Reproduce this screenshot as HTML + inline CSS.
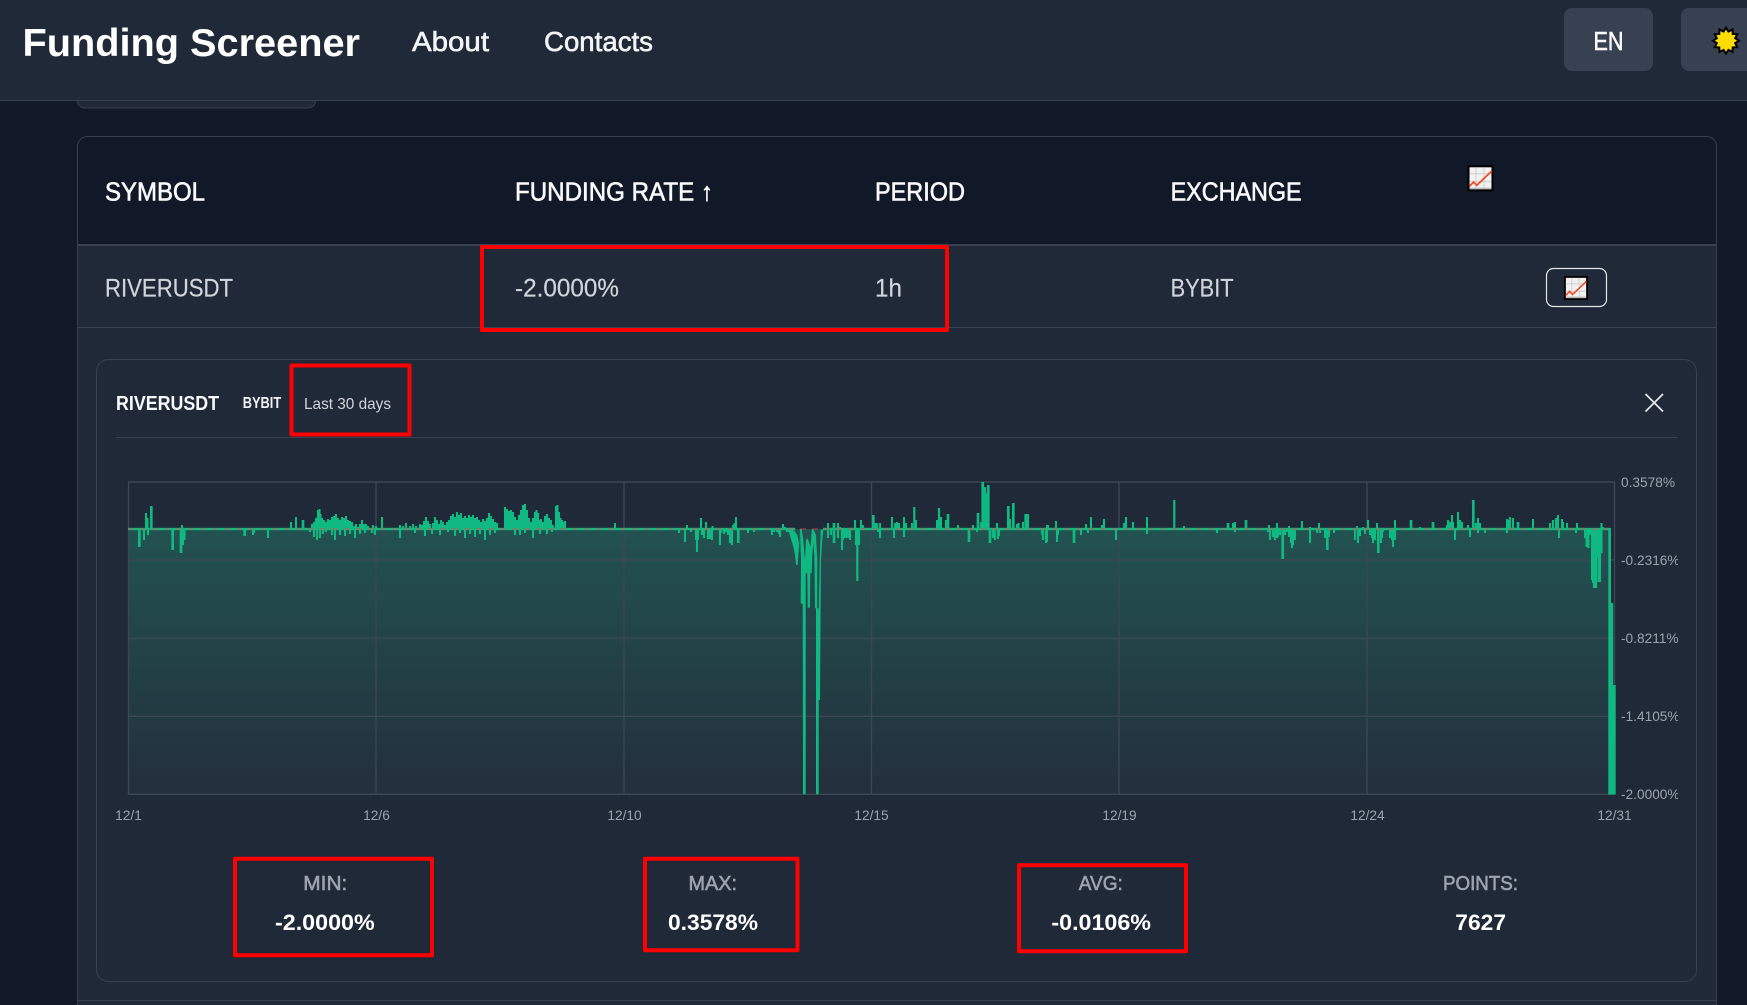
<!DOCTYPE html>
<html lang="en">
<head>
<meta charset="utf-8">
<title>Funding Screener</title>
<style>
html,body{margin:0;padding:0;background:#111827;width:1747px;height:1005px;overflow:hidden}
svg{display:block;font-family:"Liberation Sans",Arial,sans-serif}
.m{stroke:currentColor;stroke-width:.6}
.r{stroke:currentColor;stroke-width:.2}
.ax{fill:#9ca3af;font-size:13.7px}
.xl{fill:#9ca3af;font-size:13.7px;text-anchor:middle}
</style>
</head>
<body>
<svg width="1747" height="1005" viewBox="0 0 1747 1005" xmlns="http://www.w3.org/2000/svg">
<defs>
<linearGradient id="ag" gradientUnits="userSpaceOnUse" x1="0" y1="529" x2="0" y2="794">
<stop offset="0" stop-color="#225250"/><stop offset="1" stop-color="#232f3d"/>
</linearGradient>
<clipPath id="yclip"><rect x="1615" y="470" width="63" height="340"/></clipPath>
<g id="emo">
<rect x="1" y="1" width="24" height="24" fill="#f1f1f1" stroke="#000" stroke-width="2"/>
<path d="M8.5 2V24M16.5 2V24M2 8.5H24M2 16.5H24" stroke="#cfcfcf" stroke-width="1" fill="none"/>
<path d="M2 23H24" stroke="#a8a8a8" stroke-width="1"/>
<path d="M2 21L6 16.7L9.3 20L24.3 5.7" stroke="#f04a24" stroke-width="1.7" fill="none"/>
</g>
</defs>

<!-- previous card peeking under header -->
<rect x="77.5" y="80" width="238" height="28" rx="7" fill="#1f2937" stroke="#374151"/>

<!-- table wrapper -->
<rect x="77.5" y="136.5" width="1639" height="900" rx="10" fill="#111827" stroke="#374151"/>
<path d="M78 245H1716V1005H78Z" fill="#1f2937"/>
<path d="M77.5 244V1005M1716.5 244V1005" stroke="#374151" fill="none"/>
<rect x="78" y="244" width="1638" height="2" fill="#374151"/>
<rect x="78" y="327" width="1638" height="1" fill="#374151"/>
<rect x="78" y="1000" width="1638" height="1" fill="#374151"/>

<!-- header -->
<rect x="0" y="0" width="1747" height="100" fill="#1f2937"/>
<rect x="0" y="100" width="1747" height="1" fill="#374151"/>
<text x="22.500" y="56" font-size="39" font-weight="700" fill="#fff" textLength="337.500" lengthAdjust="spacingAndGlyphs">Funding Screener</text>
<text x="412" y="51" font-size="28" fill="#f3f4f6" class="m" style="color:#f3f4f6" textLength="77" lengthAdjust="spacingAndGlyphs">About</text>
<text x="544" y="51" font-size="28" fill="#f3f4f6" class="m" style="color:#f3f4f6" textLength="109" lengthAdjust="spacingAndGlyphs">Contacts</text>
<rect x="1564" y="8" width="89" height="63" rx="8" fill="#374151"/>
<text x="1593.5" y="50" font-size="26" fill="#f9fafb" class="m" style="color:#f9fafb" textLength="30" lengthAdjust="spacingAndGlyphs">EN</text>
<rect x="1681" y="8" width="90" height="63" rx="8" fill="#374151"/>
<polygon transform="translate(1726 40.7)" fill="#ffdc00" stroke="#000" stroke-width="2" stroke-linejoin="miter" points="13,0 9.18,2.46 11.26,6.5 6.72,6.72 6.5,11.26 2.46,9.18 0,13 -2.46,9.18 -6.5,11.26 -6.72,6.72 -11.26,6.5 -9.18,2.46 -13,0 -9.18,-2.46 -11.26,-6.5 -6.72,-6.72 -6.5,-11.26 -2.46,-9.18 0,-13 2.46,-9.18 6.5,-11.26 6.72,-6.72 11.26,-6.5 9.18,-2.46"/>

<!-- table head -->
<g font-size="25.5" fill="#f9fafb" class="m" style="color:#f9fafb">
<text x="105" y="200.300" textLength="100" lengthAdjust="spacingAndGlyphs">SYMBOL</text>
<text x="515" y="200.300" textLength="198" lengthAdjust="spacingAndGlyphs">FUNDING RATE ↑</text>
<text x="875" y="200.300" textLength="90" lengthAdjust="spacingAndGlyphs">PERIOD</text>
<text x="1170.6" y="200.300" textLength="131" lengthAdjust="spacingAndGlyphs">EXCHANGE</text>
</g>
<use href="#emo" x="1467.5" y="165.3"/>

<!-- table row -->
<g font-size="25" fill="#d1d5db" class="r" style="color:#d1d5db">
<text x="105" y="296.300" textLength="128" lengthAdjust="spacingAndGlyphs">RIVERUSDT</text>
<text x="515" y="296.300" textLength="104" lengthAdjust="spacingAndGlyphs">-2.0000%</text>
<text x="875" y="296.300" textLength="27" lengthAdjust="spacingAndGlyphs">1h</text>
<text x="1170.6" y="296.300" textLength="63" lengthAdjust="spacingAndGlyphs">BYBIT</text>
</g>
<rect x="1546.5" y="268.5" width="60" height="38" rx="7" fill="none" stroke="#e5e7eb" stroke-width="1.2"/>
<g transform="translate(1564 276) scale(.923)"><use href="#emo"/></g>

<!-- chart card -->
<rect x="96.5" y="359.5" width="1600" height="622" rx="12" fill="#1f2937" stroke="#374151"/>
<text x="116" y="410" font-size="20" font-weight="700" fill="#f9fafb" textLength="103" lengthAdjust="spacingAndGlyphs">RIVERUSDT</text>
<text x="242.7" y="408" font-size="16" font-weight="700" fill="#f3f4f6" textLength="38.5" lengthAdjust="spacingAndGlyphs">BYBIT</text>
<text x="304" y="409" font-size="16" fill="#d1d5db" textLength="87" lengthAdjust="spacingAndGlyphs">Last 30 days</text>
<path d="M1645.5 394L1663 411.5M1663 394L1645.5 411.5" stroke="#e5e7eb" stroke-width="1.8" fill="none"/>
<rect x="116" y="437" width="1561" height="1" fill="#374151"/>

<!-- plot -->
<rect x="128" y="529" width="1481" height="265" fill="url(#ag)"/>
<path d="M128.5 482V794.5M376 482V794.5M624 482V794.5M871.5 482V794.5M1119 482V794.5M1367 482V794.5M1614.5 482V794.5M128 482H1615M128 560H1615M128 638.300H1615M128 716.300H1615M128 794.300H1615" stroke="#3a4754" stroke-width="1.4" fill="none"/>

<!-- thin spikes -->
<path fill="none" stroke="#10b981" stroke-width="2.1" d="M144 529V540M146 529V513M147.500 529V518M148 529V535M183 529V545M184.500 529V540M182 529V525M253 529V535M254 529V533M268 529V538M291 529V522M296 529V517
M312 529V524M314 529V522M316 529V518M318 529V510M319.500 529V509M320.500 529V514M322 529V518M324 529V520M326 529V522M328 529V519M330 529V520M332 529V517M334 529V516M336 529V514M338 529V518M340 529V520M342 529V517M344 529V518M346 529V516M348 529V520M350 529V521M352 529V522M354 529V526M356 529V524M358 529V527M360 529V524M362 529V520M364 529V524M366 529V524M368 529V526M370 529V528M373 529V525M376 529V526M382 529V517
M310 529V532M314 529V537M317 529V540M320 529V538M323 529V534M326 529V532M332 529V535M335 529V540M340 529V535M345 529V536M350 529V534M355 529V538M360 529V534M365 529V533M372 529V533M375 529V535M400 529V538
M400 529V525M403 529V526M406 529V523M410 529V526M413 529V524M416 529V526M420 529V524M422 529V525M424 529V521M426 529V517M428 529V521M430 529V524M433 529V523M435 529V517M437 529V520M439 529V524M441 529V520M443 529V522M445 529V525M415 529V533M425 529V536M432 529V534M440 529V535
M447 529V522M449 529V520M451 529V516M453 529V514M455 529V517M457 529V512M459 529V515M461 529V513M463 529V518M465 529V516M467 529V518M469 529V515M471 529V517M473 529V515M475 529V518M477 529V517M479 529V520M481 529V522M483 529V519M485 529V521M487 529V518M489 529V513M491 529V516M493 529V519M495 529V522M497 529V523M448 529V532M455 529V536M460 529V533M465 529V538M470 529V534M475 529V537M480 529V534M485 529V540M490 529V535M495 529V533
M505 529V507M507 529V509M509 529V511M511 529V510M513 529V512M515 529V517M517 529V520M519 529V515M521 529V510M523 529V505M525 529V504M527 529V510M529 529V518M531 529V522M533 529V518M535 529V512M536.500 529V510M538 529V513M539.500 529V520M541 529V519M543 529V522M545 529V516M547 529V514M549 529V518M551 529V520M553 529V525M556 529V506M557.500 529V505M559 529V512M560.500 529V518M562 529V520M563.500 529V522M565 529V521M515 529V535M520 529V535M525 529V533M533 529V538M540 529V534M547 529V534M552 529V532
M615 529V523M679 529V533M685 529V542M687 529V525M691 529V532M697 529V552M696 529V540M698 529V540M701 529V518M702 529V535M704 529V538M706 529V522M708 529V539M710 529V539M712 529V540M712.500 529V526M720 529V545M721 529V533M724 529V534M726 529V532M728 529V535M730 529V543M732 529V545M733 529V525M736 529V517M734.500 529V523
M748 529V533M754 529V532M772 529V535M774 529V532M777 529V532M779 529V534M780 529V537M783 529V524M785 529V527M787 529V532M789 529V532
M828 529V523M828 529V538M831 529V535M838 529V523M838 529V538M840 529V527M842 529V550M843 529V540M845 529V538M847 529V538M849 529V538M850 529V540M855 529V520M856 529V545M859 529V545M861 529V520M863 529V525M875 529V523M877 529V523M878 529V532M880 529V523M880 529V538M892 529V517M894 529V538M895 529V523M897 529V522M899 529V523M904 529V517M904 529V537M906 529V523M912 529V523M916 529V520M937 529V520M941 529V517M946 529V520M958 529V525
M973 529V525M977 529V532M981 529V522M985 529V487M986 529V493M993 529V538M995 529V540M997 529V523M998 529V539M999 529V536M1010 529V519M1017 529V524M1018.500 529V523M1023 529V522M1028 529V514
M1042 529V535M1043 529V540M1046 529V543M1047 529V525M1047 529V542M1048 529V525M1056 529V521M1057 529V542M1058 529V535M1081 529V535M1086 529V524M1088 529V533M1091 529V517M1102 529V525M1104 529V519M1116 529V540M1124 529V523M1126 529V517M1133 529V522M1147 529V517M1147 529V534M1184 529V526M1217 529V533M1233 529V523M1235 529V522M1235 529V532
M1268 529V532M1269 529V525M1270 529V540M1273 529V537M1275 529V540M1277 529V523M1277 529V538M1278 529V537M1280 529V535M1285 529V535M1287 529V532M1289 529V526M1289 529V537M1291 529V543M1292 529V548M1293 529V545M1295 529V540M1302 529V521M1310 529V527M1310 529V543M1317 529V533M1319 529V523M1320 529V533M1325 529V538M1329 529V537M1334 529V533M1355 529V540M1357 529V526M1358 529V543
M1360 529V536M1363 529V527M1365 529V534M1368 529V520M1370 529V535M1372 529V538M1373 529V543M1375 529V540M1377 529V523M1381 529V543M1382 529V538M1383 529V532M1390 529V538M1392 529V540M1393 529V547M1395 529V520M1395 529V540M1420 529V527M1447 529V525M1448 529V520M1450 529V522M1452 529V515M1453 529V522M1455 529V540M1458 529V512M1460 529V520M1462 529V522M1468 529V525M1470 529V537M1476 529V523M1478 529V518M1478 529V533M1480 529V523M1485 529V533M1507 529V519M1507 529V533M1508.500 529V520M1510 529V517M1513 529V518M1533 529V519M1550 529V523M1553 529V520M1556 529V518M1558 529V515M1559 529V538M1562 529V519M1563 529V522M1567 529V523M1577 529V523M1576 529V533
M1585 529V538M1586.500 529V547M1587.500 529V535M1588.500 529V548M1590 529V535M1592 529V580M1593 529V583M1594 529V588M1596 529V588M1597.500 529V557M1598.500 529V582M1600 529V582M1601.500 529V523M1601.500 529V553M1603 529V527"/>

<!-- thick spikes -->
<path fill="none" stroke="#10b981" stroke-width="2.7" d="M139.300 529V547M151.300 529V506M172.700 529V550M181 529V553M244.700 529V536M303 529V520M738.300 529V543M834 529V523M834 529V543M873.300 529V515M948 529V514M969 529V542M978 529V513M982.700 529V482M988.300 529V485M990 529V543M1008.300 529V506M1013.300 529V503M1025.700 529V514M1074 529V543M1228 529V523M1246 529V520M1282.700 529V559M1327.300 529V550M1378.300 529V553M1411 529V520M1433 529V522M1473.300 529V500M1518 529V522"/>
<path fill="none" stroke="#10b981" stroke-width="2.2" d="M857.300 529V581M914.300 529V507M939 529V508M1174.300 529V500"/>

<!-- deep drop cluster -->
<path fill="#10b981" d="M788.300 529L790.700 538.300L793.300 546.700L795 555L796 565L797.700 565L798.300 555L799.300 543.300L800 530.700L801 560L800.700 603.300L802.700 604L803 794.300L805.700 794.300L805.700 573.300L807.300 573.300L807.700 607.700L810 607.700L810.300 573.300L811.700 573.300L812.300 555L813.300 543.300L814.300 555L815 608.300L816 608.300L816 794.300L818.700 794.300L818.700 700L820 700L820.300 650L821 560L822.300 540L823.300 530L820.700 529.300L819.700 560L818.700 608.300L817.300 608.300L817.300 560L816 535L813.300 529L811.700 530L810.700 546.700L809.300 543.300L807.700 538.300L806 540L805 560L803.300 540L801.700 529L800 529L799 543.300L797.300 535L795 531.700L791.700 529Z"/>

<!-- zero line + final drop -->
<rect x="128" y="527.800" width="667" height="2.400" fill="#10b981"/>
<rect x="823" y="527.800" width="786" height="2.400" fill="#10b981"/>
<path d="M128 529H1609" stroke="#ef4444" stroke-width="1" stroke-dasharray="6 6" opacity=".75" fill="none"/>
<rect x="1608.300" y="528" width="2.700" height="266.500" fill="#10b981"/>
<rect x="1610.500" y="603" width="2.700" height="191.500" fill="#10b981"/>
<rect x="1613" y="685" width="2.700" height="109.500" fill="#10b981"/>

<!-- axis labels -->
<g clip-path="url(#yclip)">
<text class="ax" x="1621" y="487">0.3578%</text>
<text class="ax" x="1621" y="565">-0.2316%</text>
<text class="ax" x="1621" y="643">-0.8211%</text>
<text class="ax" x="1621" y="721">-1.4105%</text>
<text class="ax" x="1621" y="799">-2.0000%</text>
</g>
<text class="xl" x="128.500" y="820">12/1</text>
<text class="xl" x="376.500" y="820">12/6</text>
<text class="xl" x="624.500" y="820">12/10</text>
<text class="xl" x="871.500" y="820">12/15</text>
<text class="xl" x="1119.500" y="820">12/19</text>
<text class="xl" x="1367.500" y="820">12/24</text>
<text class="xl" x="1614.500" y="820">12/31</text>

<!-- stats -->
<g font-size="20" fill="#9ca3af" class="m" style="color:#9ca3af">
<text x="303.300" y="890" textLength="44" lengthAdjust="spacingAndGlyphs">MIN:</text>
<text x="688.500" y="890" textLength="48.500" lengthAdjust="spacingAndGlyphs">MAX:</text>
<text x="1078.800" y="890" textLength="44" lengthAdjust="spacingAndGlyphs">AVG:</text>
<text x="1443" y="890" textLength="75" lengthAdjust="spacingAndGlyphs">POINTS:</text>
</g>
<g font-size="22" font-weight="700" fill="#fff">
<text x="275" y="930" textLength="99.700" lengthAdjust="spacingAndGlyphs">-2.0000%</text>
<text x="668" y="930" textLength="90" lengthAdjust="spacingAndGlyphs">0.3578%</text>
<text x="1051.400" y="930" textLength="99.600" lengthAdjust="spacingAndGlyphs">-0.0106%</text>
<text x="1455.300" y="930" textLength="50.700" lengthAdjust="spacingAndGlyphs">7627</text>
</g>

<!-- red annotation boxes -->
<g fill="none" stroke="#ff0000" stroke-width="4" stroke-linejoin="round">
<rect x="482" y="247" width="465" height="83"/>
<rect x="291.500" y="365.500" width="118" height="69"/>
<rect x="235" y="858.700" width="197" height="96.600"/>
<rect x="645" y="858.700" width="152.500" height="91.600"/>
<rect x="1019" y="865.300" width="167" height="86"/>
</g>
</svg>
</body>
</html>
